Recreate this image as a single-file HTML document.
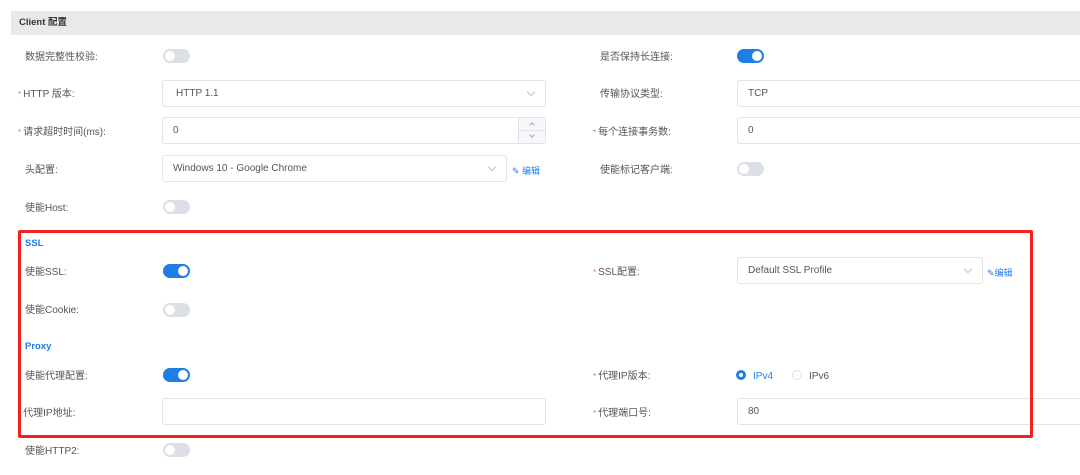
<!DOCTYPE html>
<html><head><meta charset="utf-8"><style>
*{box-sizing:border-box;margin:0;padding:0}
body{width:1080px;height:475px;overflow:hidden;background:#fff;font-family:"Liberation Sans","Noto Sans CJK SC",sans-serif;font-size:10px;color:#555;position:relative}
.a{position:absolute}
.hdr{left:11px;top:11px;width:1069px;height:24px;background:#e9e9e9;font-weight:bold;color:#333;padding-left:8px;line-height:24px;font-size:9.5px}
.lbl{line-height:14px;white-space:nowrap;margin-top:2px}
.req{color:#f56c6c;margin-right:2px;font-size:8px}
.tg{width:27px;height:14px;border-radius:7px;background:#dcdfe6}
.tg::after{content:"";position:absolute;top:2px;left:2px;width:10px;height:10px;border-radius:50%;background:#fff}
.tg.on{background:#1e7ee4}
.tg.on::after{left:15px}
.in{height:27px;border:1px solid #e2e4e8;border-radius:3px;display:flex;align-items:center;padding-left:10px;color:#555;background:#fff}
.chev{position:absolute;right:11px;top:8px;width:6px;height:6px;border-right:1px solid #c0c4cc;border-bottom:1px solid #c0c4cc;transform:rotate(45deg)}
.edit{color:#1e7ee4;font-size:9px}
.sec{color:#1e7ee4;font-weight:bold;font-size:9.5px}
.box{left:18px;top:230px;width:1015px;height:208px;border:3px solid #f32020;border-radius:2px}
</style></head><body>
<div class="a hdr">Client 配置</div>

<div class="a lbl" style="left:25px;top:49px">数据完整性校验:</div>
<div class="a tg" style="left:163px;top:49px"></div>
<div class="a lbl" style="left:600px;top:49px">是否保持长连接:</div>
<div class="a tg on" style="left:737px;top:49px"></div>

<div class="a lbl" style="left:18px;top:86px"><span class="req">*</span>HTTP 版本:</div>
<div class="a in" style="left:162px;top:80px;width:384px;padding-left:13px">HTTP 1.1<span class="chev"></span></div>
<div class="a lbl" style="left:600px;top:86px">传输协议类型:</div>
<div class="a in" style="left:737px;top:80px;width:350px">TCP</div>

<div class="a lbl" style="left:18px;top:124px"><span class="req">*</span>请求超时时间(ms):</div>
<div class="a in" style="left:162px;top:117px;width:384px">0
 <div class="a" style="right:0;top:0;width:27px;height:25px;border-left:1px solid #e2e4e8;background:#f5f7fa">
  <div class="a" style="left:0;top:12px;width:26px;border-top:1px solid #e2e4e8"></div>
  <div class="a" style="left:11px;top:5px;width:4px;height:4px;border-left:1px solid #aaa;border-top:1px solid #aaa;transform:rotate(45deg)"></div>
  <div class="a" style="left:11px;top:15px;width:4px;height:4px;border-right:1px solid #aaa;border-bottom:1px solid #aaa;transform:rotate(45deg)"></div>
 </div>
</div>
<div class="a lbl" style="left:593px;top:124px"><span class="req">*</span>每个连接事务数:</div>
<div class="a in" style="left:737px;top:117px;width:350px">0</div>

<div class="a lbl" style="left:25px;top:162px">头配置:</div>
<div class="a in" style="left:162px;top:155px;width:345px">Windows 10 - Google Chrome<span class="chev"></span></div>
<div class="a edit" style="left:512px;top:164px">✎ 编辑</div>
<div class="a lbl" style="left:600px;top:162px">使能标记客户端:</div>
<div class="a tg" style="left:737px;top:162px"></div>

<div class="a lbl" style="left:25px;top:200px">使能Host:</div>
<div class="a tg" style="left:163px;top:200px"></div>

<div class="a sec" style="left:25px;top:238px">SSL</div>
<div class="a lbl" style="left:25px;top:264px">使能SSL:</div>
<div class="a tg on" style="left:163px;top:264px"></div>
<div class="a lbl" style="left:593px;top:264px"><span class="req">*</span>SSL配置:</div>
<div class="a in" style="left:737px;top:257px;width:246px">Default SSL Profile<span class="chev"></span></div>
<div class="a edit" style="left:987px;top:266px">✎编辑</div>

<div class="a lbl" style="left:25px;top:302px">使能Cookie:</div>
<div class="a tg" style="left:163px;top:303px"></div>

<div class="a sec" style="left:25px;top:341px">Proxy</div>
<div class="a lbl" style="left:25px;top:368px">使能代理配置:</div>
<div class="a tg on" style="left:163px;top:368px"></div>
<div class="a lbl" style="left:593px;top:368px"><span class="req">*</span>代理IP版本:</div>
<div class="a" style="left:736px;top:370px;width:10px;height:10px;border-radius:50%;background:#1e7ee4"><div class="a" style="left:3px;top:3px;width:4px;height:4px;border-radius:50%;background:#fff"></div></div>
<div class="a lbl" style="left:753px;top:368px;color:#1e7ee4">IPv4</div>
<div class="a" style="left:792px;top:370px;width:10px;height:10px;border-radius:50%;border:1px solid #dcdfe6"></div>
<div class="a lbl" style="left:809px;top:368px">IPv6</div>

<div class="a lbl" style="left:18px;top:405px"><span class="req">*</span>代理IP地址:</div>
<div class="a in" style="left:162px;top:398px;width:384px"></div>
<div class="a lbl" style="left:593px;top:405px"><span class="req">*</span>代理端口号:</div>
<div class="a in" style="left:737px;top:398px;width:350px">80</div>

<div class="a box"></div>

<div class="a lbl" style="left:25px;top:443px">使能HTTP2:</div>
<div class="a tg" style="left:163px;top:443px"></div>
</body></html>
